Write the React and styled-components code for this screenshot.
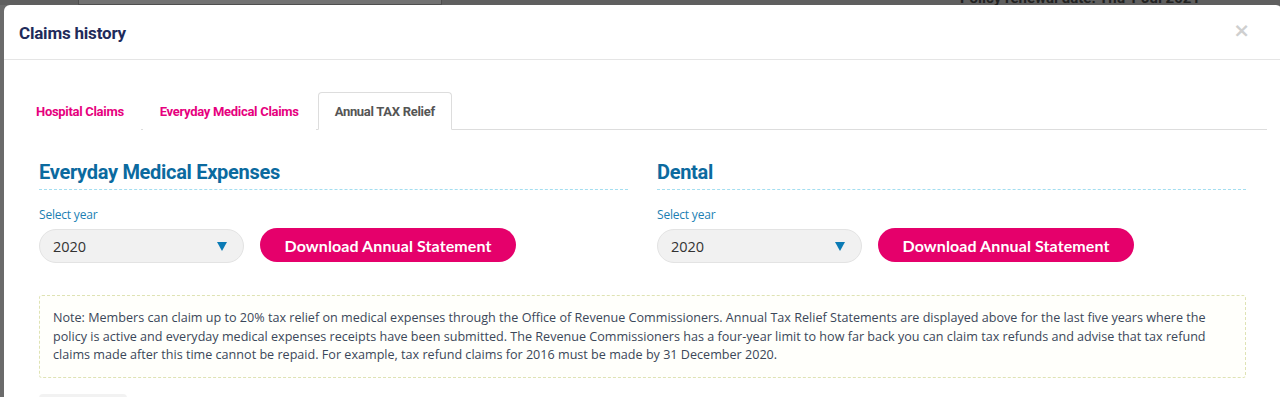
import React from "react";
import styled, { createGlobalStyle } from "styled-components";

const GlobalStyle = createGlobalStyle`
  html, body {
    margin: 0;
    padding: 0;
    height: 397px;
    overflow: hidden;
    background: #6b6b6b;
    font-family: "Open Sans", "Liberation Sans", sans-serif;
  }
`;

const Backdrop = styled.div`
  position: relative;
  width: 1280px;
  height: 397px;
  overflow: hidden;
  background: #6b6b6b;
`;

const BehindBar = styled.div`
  display: flex;
  height: 5px;
  overflow: hidden;
  background: #5f5f5f;
`;

const BehindCard = styled.div`
  width: 362px;
  margin-left: 78px;
  border: 1px solid #4e4e4e;
  border-top: none;
  background: #727272;
`;

const BehindText = styled.div`
  margin-left: 518px;
  margin-top: -11px;
  font-family: "Roboto", "Liberation Sans", sans-serif;
  font-weight: 700;
  font-size: 15px;
  color: #222;
`;

const Modal = styled.div`
  margin-left: 4px;
  width: 1278px;
  background: #fff;
  border-radius: 6px 6px 0 0;
  height: 400px;
`;

const Header = styled.div`
  display: flex;
  align-items: center;
  justify-content: space-between;
  height: 55px;
  padding: 2px 32px 0 15px;
  box-sizing: border-box;
  border-bottom: 1px solid #e5e5e5;
`;

const Title = styled.h4`
  margin: 0;
  font-family: "Roboto", "Liberation Sans", sans-serif;
  font-weight: 700;
  font-size: 17px;
  letter-spacing: -0.2px;
  color: #1f2b5b;
`;

const Close = styled.span`
  font-family: "DejaVu Sans", sans-serif;
  font-weight: 700;
  font-size: 20px;
  line-height: 1;
  color: #cfcfcf;
  margin-top: -6px;
`;

const Body = styled.div`
  padding: 32px 15px 0;
`;

const TabBar = styled.div`
  display: flex;
  align-items: flex-end;
  border-bottom: 1px solid #dddddd;
`;

const Tab = styled.div`
  height: 38px;
  margin-right: 2px;
  margin-bottom: -1px;
  padding: 1px 16px 0;
  box-sizing: border-box;
  display: flex;
  align-items: center;
  font-family: "Roboto", "Liberation Sans", sans-serif;
  font-weight: 700;
  font-size: 13px;
  letter-spacing: -0.3px;
  border: 1px solid ${(p) => (p.active ? "#dddddd" : "transparent")};
  border-bottom-color: ${(p) => (p.active ? "#fff" : "transparent")};
  border-radius: 4px 4px 0 0;
  background: #fff;
  color: ${(p) => (p.active ? "#555555" : "#e6007e")};
`;

const TabPane = styled.div`
  padding: 30px 21px 0 20px;
`;

const Columns = styled.div`
  display: grid;
  grid-template-columns: 1fr 1fr;
  column-gap: 29px;
`;

const Section = styled.div`
  display: flex;
  flex-direction: column;
`;

const SectionTitle = styled.h3`
  margin: 0;
  padding-bottom: 5px;
  font-family: "Roboto", "Liberation Sans", sans-serif;
  font-weight: 700;
  font-size: 20px;
  letter-spacing: -0.3px;
  line-height: 24px;
  color: #0b6a9f;
  border-bottom: 1px dashed #a4def0;
`;

const Label = styled.label`
  margin-top: 16px;
  font-family: "Open Sans", sans-serif;
  font-size: 12px;
  letter-spacing: -0.2px;
  color: #1b7fb3;
`;

const Controls = styled.div`
  display: flex;
  align-items: center;
  gap: 16px;
  margin-top: 4px;
`;

const Select = styled.div`
  box-sizing: border-box;
  width: 205px;
  height: 34px;
  margin-top: 2px;
  padding: 0 16px 0 13px;
  display: flex;
  align-items: center;
  justify-content: space-between;
  background: #f1f1f1;
  border: 1px solid #e3e3e3;
  border-radius: 17px;
  font-family: "Open Sans", sans-serif;
  font-size: 14.5px;
  color: #333;
`;

const Caret = styled.span`
  width: 0;
  height: 0;
  border-left: 5px solid transparent;
  border-right: 5px solid transparent;
  border-top: 9px solid #0b7bb5;
`;

const Button = styled.button`
  width: 256px;
  height: 34px;
  border: none;
  border-radius: 17px;
  background: #e5006b;
  color: #fff;
  font-family: "Lato", "Liberation Sans", sans-serif;
  font-weight: 700;
  font-size: 16px;
  letter-spacing: 0.1px;
  cursor: pointer;
`;

const Note = styled.div`
  margin-top: 32px;
  padding: 13px 13px 12px;
  border: 1px dashed #dfe3b4;
  border-radius: 3px;
  background: #fffffb;
  font-family: "Open Sans", sans-serif;
  font-size: 12.6px;
  line-height: 18.7px;
  color: #3b4759;
`;

const BackButton = styled.div`
  margin-top: 16px;
  width: 88px;
  height: 30px;
  border-radius: 4px;
  background: #f2f2f2;
`;

const years = ["Everyday Medical Expenses", "Dental"];

export default function App() {
  return (
    <>
      <GlobalStyle />
      <Backdrop>
        <BehindBar>
          <BehindCard />
          <BehindText>Policy renewal date: Thu 1 Jul 2021</BehindText>
        </BehindBar>
        <Modal>
          <Header>
            <Title>Claims history</Title>
            <Close>×</Close>
          </Header>
          <Body>
            <TabBar>
              <Tab>Hospital Claims</Tab>
              <Tab>Everyday Medical Claims</Tab>
              <Tab active>Annual TAX Relief</Tab>
            </TabBar>
            <TabPane>
              <Columns>
                {years.map((name) => (
                  <Section key={name}>
                    <SectionTitle>{name}</SectionTitle>
                    <Label>Select year</Label>
                    <Controls>
                      <Select>
                        2020
                        <Caret />
                      </Select>
                      <Button>Download Annual Statement</Button>
                    </Controls>
                  </Section>
                ))}
              </Columns>
              <Note>
                Note: Members can claim up to 20% tax relief on medical expenses through the Office of Revenue
                Commissioners. Annual Tax Relief Statements are displayed above for the last five years where the
                policy is active and everyday medical expenses receipts have been submitted. The Revenue
                Commissioners has a four-year limit to how far back you can claim tax refunds and advise that tax
                refund claims made after this time cannot be repaid. For example, tax refund claims for 2016 must be
                made by 31 December 2020.
              </Note>
              <BackButton />
            </TabPane>
          </Body>
        </Modal>
      </Backdrop>
    </>
  );
}
